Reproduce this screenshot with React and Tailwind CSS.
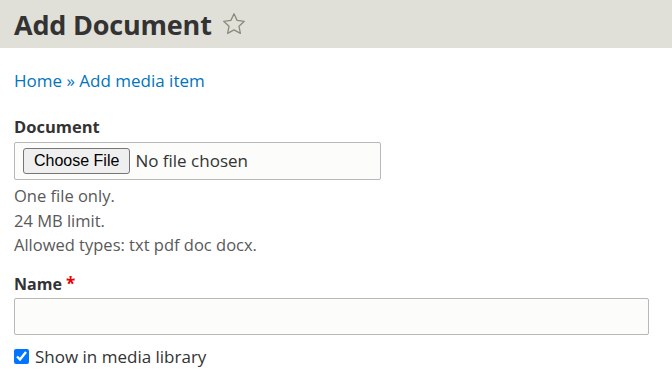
import React from "react"

const font = { fontFamily: '"Open Sans", "Noto Sans", sans-serif' }

function Star() {
  return (
    <svg width="24" height="24" viewBox="0 0 24 24" className="ml-[10px]">
      <path
        d="M12 1.8l3.1 6.6 7.2.9-5.3 5 1.4 7.1L12 17.9l-6.4 3.5 1.4-7.1-5.3-5 7.2-.9z"
        fill="none"
        stroke="#8a8a7c"
        strokeWidth="1.3"
        strokeLinejoin="round"
      />
    </svg>
  )
}

export default function App() {
  return (
    <div className="min-h-screen bg-white text-[#333]" style={font}>
      {/* Page title */}
      <div className="h-12 bg-[#e0e0d8] flex items-center px-[14px]">
        <h1 className="text-[27px] font-bold leading-none tracking-[-0.2px] text-[#333]">Add Document</h1>
        <Star />
      </div>

      <div className="px-[14px]">
        {/* Breadcrumb */}
        <nav className="mt-[21px] text-[17px] leading-6">
          <a href="#" className="text-[#0074bd]">Home</a>
          <span className="text-[#0074bd]"> » </span>
          <a href="#" className="text-[#0074bd]">Add media item</a>
        </nav>

        {/* Document upload */}
        <div className="mt-[24px]">
          <label className="block text-[16.5px] font-bold leading-5">Document</label>
          <div className="mt-[5px] w-[367px] h-[38px] border border-[#b8b8b8] rounded-[2px] bg-[#fcfcfa] flex items-center px-[8px]">
            <button
              className="h-[26px] px-[10px] border border-[#767676] rounded-[3px] bg-[#efefef] text-[16px] leading-none text-black"
              style={{ fontFamily: '"Liberation Sans", Arial, sans-serif' }}
            >
              Choose File
            </button>
            <span className="ml-[5px] text-[17px] text-[#333]">No file chosen</span>
          </div>
          <div className="mt-[4px] text-[16.5px] leading-[24.5px] text-[#595959]">
            <p>One file only.</p>
            <p>24 MB limit.</p>
            <p>Allowed types: txt pdf doc docx.</p>
          </div>
        </div>

        {/* Name */}
        <div className="mt-[16px]">
          <label className="block text-[16px] font-bold leading-5">
            Name <span className="text-[#e00] text-[17px]">*</span>
          </label>
          <input
            type="text"
            className="mt-[4px] block w-[635px] h-[37px] border border-[#b8b8b8] rounded-[2px] bg-[#fcfcfa] px-2 outline-none"
          />
        </div>

        {/* Show in media library */}
        <label className="mt-[10px] flex items-center gap-[6px] text-[17px] leading-6">
          <input type="checkbox" defaultChecked className="w-[15px] h-[15px] m-0 accent-[#0075ff]" />
          Show in media library
        </label>
      </div>
    </div>
  )
}
